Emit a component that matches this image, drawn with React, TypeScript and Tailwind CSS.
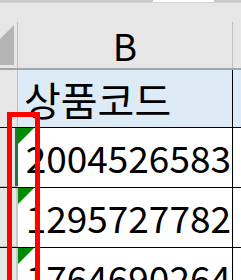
import React from "react";

const rows = ["2004526583", "1295727782", "1764690264"];

function ErrorFlag() {
  return (
    <svg className="absolute left-0 top-0" width="16" height="16" viewBox="0 0 16 16">
      <polygon points="0,0 16,0 0,16" fill="#008a00" />
    </svg>
  );
}

export default function App() {
  return (
    <div
      className="relative h-[280px] w-[241px] overflow-hidden bg-white"
      style={{ fontFamily: '"Noto Sans CJK KR", "Noto Sans", sans-serif' }}
    >
      {/* formula bar edge */}
      <div className="flex h-[2px] bg-[#c8c8c8]">
        <div className="ml-[153px] h-[2px] w-[61px] bg-white" />
      </div>
      <div className="h-[20px] border-t border-[#d4d4d4] bg-[#e6e6e6]" />

      {/* column header */}
      <div className="flex h-[48px] border-b-2 border-[#a6a6a6] bg-[#e6e6e6]">
        <div className="relative w-[18px] shrink-0 border-r border-[#c0c0c0]">
          <svg className="absolute left-0 top-[3px]" width="14" height="40" viewBox="0 0 14 40">
            <polygon points="14,0 14,40 -26,40" fill="#b4b4b4" />
          </svg>
        </div>
        <div className="flex w-[215px] shrink-0 items-center justify-center border-r border-[#c0c0c0] text-[37px] leading-none text-black">
          B
        </div>
        <div className="flex-1" />
      </div>

      {/* header row */}
      <div className="flex h-[58px] border-b border-black">
        <div className="w-[18px] shrink-0 border-r border-[#c0c0c0] bg-[#e6e6e6]" />
        <div className="flex w-[215px] shrink-0 items-center border-r border-black bg-[#ddebf7] pl-[6px] text-[40px] leading-none text-black">
          상품코드
        </div>
        <div className="flex-1 bg-[#ddebf7]" />
      </div>

      {rows.map((code, i) => (
        <div key={code} className="flex h-[60px] border-b border-black">
          <div className="w-[18px] shrink-0 border-b border-[#c0c0c0] bg-[#e6e6e6]">
            <div
              className={
                i === 0
                  ? "ml-[15px] h-full w-[3px] bg-[#217346]"
                  : "ml-[16px] h-full w-[2px] bg-[#c8c8c8]"
              }
            />
          </div>
          <div className="relative flex w-[215px] shrink-0 items-center justify-end border-r border-black pr-[1px] text-[37px] leading-none text-black">
            <ErrorFlag />
            {code}
          </div>
          <div className="flex-1" />
        </div>
      ))}

      {/* highlight box */}
      <div className="absolute left-[7px] top-[112px] h-[200px] w-[33px] border-[5px] border-[#ff0000]" />
    </div>
  );
}
